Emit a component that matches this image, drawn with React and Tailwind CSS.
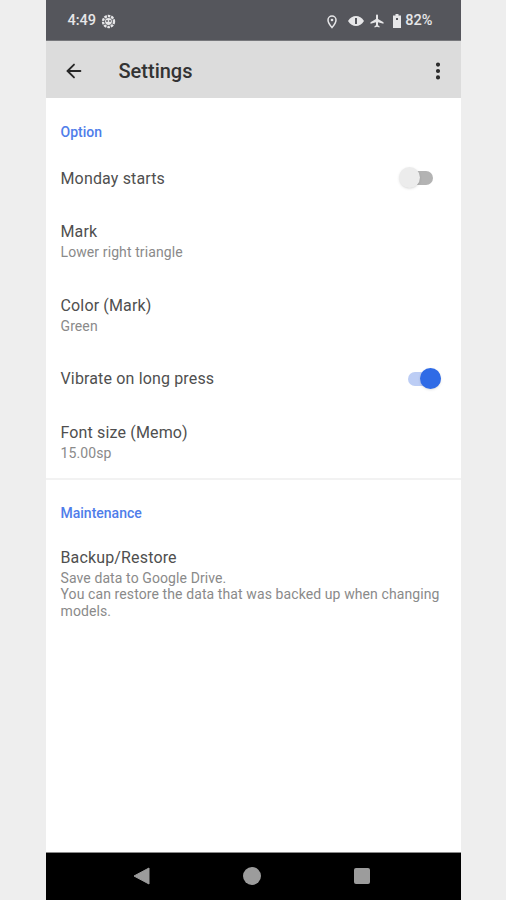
import React from "react";
import { ArrowLeft, EllipsisVertical } from "lucide-react";

const Section = ({ children }) => <div className="h-[17px] text-[14px] leading-[17px] font-medium text-[#4f7dea]">{children}</div>;

const Pref = ({ title, sub, className = "" }) => (
    <div className={className}>
        <div className="h-[21px] text-[16px] leading-[21px] tracking-[0.15px] text-[#4f4f4f]">{title}</div>
        <div className="mt-[2px] text-[14px] leading-[16.5px] tracking-[0.1px] text-[#8a8a8a]">{sub}</div>
    </div>
);

const Toggle = ({ on }) => (
    <div className={on ? "relative mr-[5px] h-[14px] w-[33px] rounded-full bg-[#bccdf5]" : "relative mr-[13px] -translate-y-px h-[14px] w-[33px] rounded-full bg-[#b3b3b3]"}>
        <div
            className={
                on
                    ? "absolute -top-[3.5px] right-0 h-[21px] w-[21px] rounded-full bg-[#2f6be6] shadow-sm"
                    : "absolute -top-[3.5px] -left-px h-[21px] w-[21px] rounded-full bg-[#ececec] shadow-sm"
            }
        ></div>
    </div>
);

const SwitchRow = ({ title, on, className = "" }) => (
    <div className={"flex h-[21px] items-center justify-between " + className}>
        <div className="text-[16px] leading-[21px] tracking-[0.15px] text-[#4f4f4f]">{title}</div>
        <Toggle on={on} />
    </div>
);

const App = () => {
    return (
        <div className="flex h-[900px] justify-center overflow-hidden bg-[#eeeeee] font-['Roboto',sans-serif]">
            <div className="flex w-[415px] flex-col bg-white">
                {/* status bar */}
                <div className="flex h-[41px] items-center justify-between border-b border-[#77787c] bg-[#55565c] pt-[2px] pr-[28px] pl-[22px] text-[14.5px] font-medium text-[#e6e6e8]">
                    <div className="flex items-center gap-[5px]">
                        <span>4:49</span>
                        <svg width="15" height="15" viewBox="0 0 15 15">
                            <circle cx="7.5" cy="7.5" r="5.5" fill="none" stroke="#e6e6e8" strokeWidth="2.4" strokeDasharray="2.6 0.9" />
                            <circle cx="7.5" cy="7.5" r="3.4" fill="#e6e6e8" />
                            <circle cx="6" cy="7" r="0.9" fill="#55565c" />
                            <circle cx="9" cy="7" r="0.9" fill="#55565c" />
                        </svg>
                    </div>
                    <div className="flex items-center">
                        <svg className="mr-[9px]" width="14" height="15" viewBox="0 0 14 15">
                            <path d="M7 2a4 4 0 0 0-4 4C3 9 7 13.500 7 13.500S11 9 11 6a4 4 0 0 0-4-4z" fill="none" stroke="#e6e6e8" strokeWidth="1.500" />
                            <circle cx="7" cy="6" r="1.300" fill="#e6e6e8" />
                        </svg>
                        <svg className="mr-[6px]" width="16" height="12" viewBox="0 0 16 12">
                            <path d="M0 6c2-3.500 5-5 8-5s6 1.500 8 5c-2 3.500-5 5-8 5s-6-1.500-8-5z" fill="#e6e6e8" />
                            <rect x="7" y="3" width="2" height="6" fill="#55565c" />
                        </svg>
                        <svg className="mr-[9px]" width="14" height="14" viewBox="0 0 14 14">
                            <path d="M6 1.500c0-1.500 2-1.500 2 0V5l5.500 3.300v1.400L8 8.200v3l1.500 1V13.500L7 12.800l-2.500.7v-1.300l1.500-1v-3L.5 9.700V8.300L6 5z" fill="#e6e6e8" />
                        </svg>
                        <svg className="mr-[4px]" width="8" height="14" viewBox="0 0 8 14">
                            <path d="M2.500 0h3v1.500H8V14H0V1.500h2.500z" fill="#e6e6e8" />
                            <rect x="3" y="4" width="2" height="2" fill="#55565c" />
                        </svg>
                        <span>82%</span>
                    </div>
                </div>

                {/* app bar */}
                <div className="flex h-[57px] items-center bg-[#dcdcdc] pt-[2px] pr-[12px] pl-[17px] text-[#262626]">
                    <ArrowLeft size={22} strokeWidth={2} />
                    <div className="ml-[34px] flex-1 text-[20px] font-medium text-[#333333]">Settings</div>
                    <EllipsisVertical size={22} strokeWidth={2.500} />
                </div>

                {/* list */}
                <div className="flex-1 bg-white">
                    <div className="border-b-2 border-[#f2f2f2] px-[15px] pt-[26px] pb-[16px]">
                        <Section>Option</Section>
                        <SwitchRow title="Monday starts" className="mt-[27px]" />
                        <Pref title="Mark" sub="Lower right triangle" className="mt-[32px]" />
                        <Pref title="Color (Mark)" sub="Green" className="mt-[34px]" />
                        <SwitchRow title="Vibrate on long press" on className="mt-[34px]" />
                        <Pref title="Font size (Memo)" sub="15.00sp" className="mt-[33px]" />
                    </div>
                    <div className="px-[15px] pt-[25px]">
                        <Section>Maintenance</Section>
                        <Pref
                            title="Backup/Restore"
                            sub={
                                <>
                                    Save data to Google Drive.
                                    <br />
                                    You can restore the data that was backed up when changing models.
                                </>
                            }
                            className="mt-[25px]"
                        />
                    </div>
                </div>

                {/* nav bar */}
                <div className="flex h-[48px] items-center border-t border-[#8a8a8a] bg-black pr-[88px] pb-[2px] pl-[87px]">
                    <svg width="17" height="18" viewBox="0 0 17 18">
                        <path d="M16 1v16L1 9z" fill="#9c9c9c" stroke="#9c9c9c" strokeLinejoin="round" />
                    </svg>
                    <div className="ml-[93px] h-[18px] w-[18px] rounded-full bg-[#9c9c9c]"></div>
                    <div className="ml-[93px] h-[16px] w-[16px] rounded-[2px] bg-[#9c9c9c]"></div>
                </div>
            </div>
        </div>
    );
};

export default App;
